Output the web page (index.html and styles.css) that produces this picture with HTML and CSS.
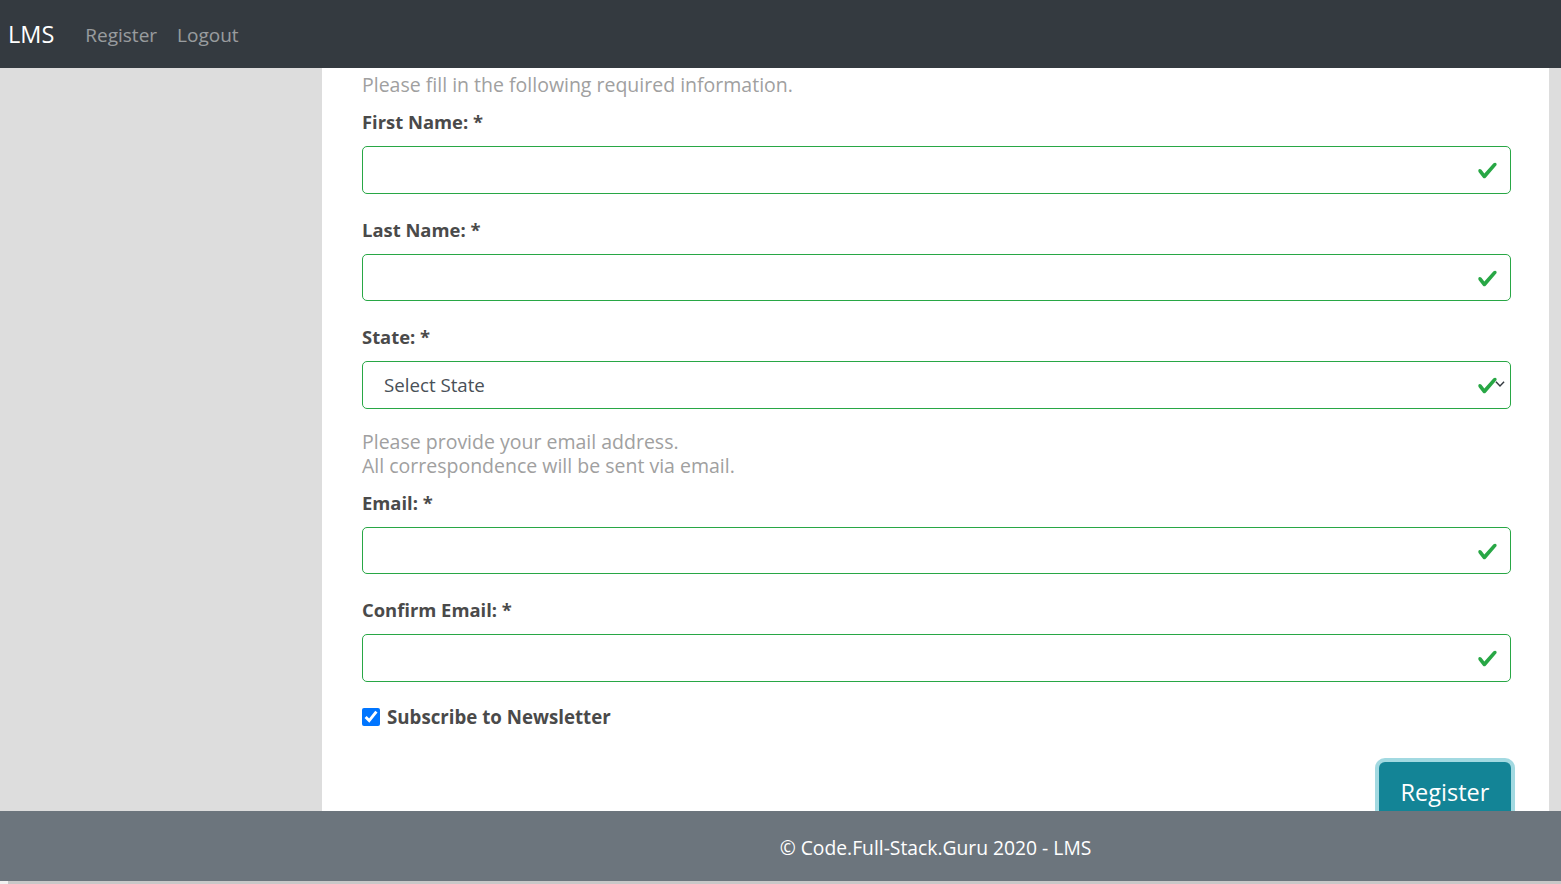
FILE: index.html
```html
<!DOCTYPE html>
<html lang="en">
<head>
<meta charset="utf-8">
<title>LMS - Register</title>
<link rel="stylesheet" href="styles.css">
</head>
<body>
<div class="app">
  <nav class="navbar">
    <a class="brand" href="#">LMS</a>
    <a class="nav-link" href="#">Register</a>
    <a class="nav-link" href="#">Logout</a>
  </nav>
  <div class="middle">
    <aside class="sidebar"></aside>
    <main class="content">
      <form class="form">
        <p class="help first-help">Please fill in the following required information.</p>
        <div class="form-group">
          <label class="label">First Name: *</label>
          <div class="field">
            <input class="control" type="text">
            <svg class="valid-icon" viewBox="0 0 8 8"><path fill="#28a745" d="M2.3 6.73L.6 4.53c-.4-1.04.46-1.4 1.1-.8l1.1 1.4 3.4-3.8c.6-.63 1.6-.27 1.2.7l-4 4.6c-.43.5-.8.4-1.1.1z"/></svg>
          </div>
        </div>
        <div class="form-group">
          <label class="label">Last Name: *</label>
          <div class="field">
            <input class="control" type="text">
            <svg class="valid-icon" viewBox="0 0 8 8"><path fill="#28a745" d="M2.3 6.73L.6 4.53c-.4-1.04.46-1.4 1.1-.8l1.1 1.4 3.4-3.8c.6-.63 1.6-.27 1.2.7l-4 4.6c-.43.5-.8.4-1.1.1z"/></svg>
          </div>
        </div>
        <div class="form-group state-group">
          <label class="label">State: *</label>
          <div class="field">
            <div class="control select">Select State</div>
            <svg class="chevron" viewBox="0 0 4 5"><path fill="none" stroke="#343a40" stroke-width=".6" d="M.3 1.6L2 3.3 3.7 1.6"/></svg>
            <svg class="valid-icon" viewBox="0 0 8 8"><path fill="#28a745" d="M2.3 6.73L.6 4.53c-.4-1.04.46-1.4 1.1-.8l1.1 1.4 3.4-3.8c.6-.63 1.6-.27 1.2.7l-4 4.6c-.43.5-.8.4-1.1.1z"/></svg>
          </div>
        </div>
        <p class="help email-help">Please provide your email address.<br>All correspondence will be sent via email.</p>
        <div class="form-group">
          <label class="label">Email: *</label>
          <div class="field">
            <input class="control" type="text">
            <svg class="valid-icon" viewBox="0 0 8 8"><path fill="#28a745" d="M2.3 6.73L.6 4.53c-.4-1.04.46-1.4 1.1-.8l1.1 1.4 3.4-3.8c.6-.63 1.6-.27 1.2.7l-4 4.6c-.43.5-.8.4-1.1.1z"/></svg>
          </div>
        </div>
        <div class="form-group">
          <label class="label">Confirm Email: *</label>
          <div class="field">
            <input class="control" type="text">
            <svg class="valid-icon" viewBox="0 0 8 8"><path fill="#28a745" d="M2.3 6.73L.6 4.53c-.4-1.04.46-1.4 1.1-.8l1.1 1.4 3.4-3.8c.6-.63 1.6-.27 1.2.7l-4 4.6c-.43.5-.8.4-1.1.1z"/></svg>
          </div>
        </div>
        <div class="check-row">
          <input class="checkbox" type="checkbox" checked>
          <span class="check-label">Subscribe to Newsletter</span>
        </div>
        <div class="actions">
          <button class="btn" type="button">Register</button>
        </div>
      </form>
    </main>
    <div class="rail"></div>
  </div>
  <footer class="footer">
    <span class="footer-text">© Code.Full-Stack.Guru 2020 - LMS</span>
  </footer>
  <div class="hscroll"><div class="hthumb"></div></div>
</div>
</body>
</html>
```
FILE: styles.css
```css
* { box-sizing: border-box; }
html, body { margin: 0; padding: 0; }
body {
  font-family: "Open Sans", "Noto Sans", sans-serif;
  background: #dddddd;
  overflow: hidden;
}
.app {
  height: 884px;
  display: flex;
  flex-direction: column;
}
.navbar {
  height: 68px;
  flex: none;
  background: #343a40;
  display: flex;
  align-items: center;
  padding: 0 8px;
}
.brand {
  color: #ffffff;
  font-size: 23.5px;
  text-decoration: none;
  margin-right: 31px;
  line-height: 1;
  padding-top: 2px;
}
.nav-link {
  color: rgba(255,255,255,0.5);
  font-size: 19px;
  text-decoration: none;
  margin-right: 20px;
  line-height: 1;
  padding-top: 2px;
}
.middle {
  flex: 1;
  display: flex;
  overflow: hidden;
  min-height: 0;
}
.sidebar {
  width: 322px;
  flex: none;
  background: #dddddd;
}
.content {
  width: 1227px;
  flex: none;
  background: #ffffff;
  padding: 5px 38px 0 40px;
}
.rail {
  flex: 1;
  background: #dddddd;
}
.form { display: flex; flex-direction: column; }
.help {
  margin: 0;
  color: #a0a0a0;
  font-size: 19.5px;
  line-height: 24px;
}
.first-help { margin-bottom: 13px; }
.email-help { margin-bottom: 13px; }
.form-group { margin-bottom: 24px; }
.state-group { margin-bottom: 21px; }
.label {
  display: block;
  color: #4a4a4a;
  font-weight: 700;
  font-size: 18.4px;
  line-height: 24px;
  margin-bottom: 12px;
}
.field { position: relative; }
.control {
  display: block;
  width: 100%;
  height: 47.5px;
  border: 1px solid #28a745;
  border-radius: 5px;
  background: #ffffff;
  font-family: inherit;
  font-size: 18.7px;
  color: #495057;
  padding: 0 21px;
  outline: none;
}
.select {
  display: flex;
  align-items: center;
}
.valid-icon {
  position: absolute;
  right: 13px;
  top: 14px;
  width: 21px;
  height: 21px;
}
.chevron {
  position: absolute;
  right: 6px;
  top: 17px;
  width: 10px;
  height: 12px;
}
.check-row {
  display: flex;
  align-items: center;
  height: 24px;
  margin-top: -1px;
}
.checkbox {
  width: 18px;
  height: 18px;
  margin: 0 7px 0 0;
  accent-color: #0075ff;
}
.check-label {
  color: #4a4a4a;
  font-weight: 700;
  font-size: 18.7px;
}
.actions {
  display: flex;
  justify-content: flex-end;
  margin-top: 33px;
}
.btn {
  width: 132px;
  height: 60px;
  background: #138496;
  color: #ffffff;
  border: none;
  border-radius: 6px;
  font-family: inherit;
  font-size: 23.5px;
  box-shadow: 0 0 0 4px #a2d9e1;
  padding: 0;
}
.footer {
  height: 70px;
  flex: none;
  background: #6c757d;
  display: flex;
  align-items: center;
  padding-left: 322px;
  padding-right: 12px;
  justify-content: center;
}
.footer-text {
  color: #ffffff;
  font-size: 19.3px;
  padding-top: 2px;
}
.hscroll {
  height: 3px;
  flex: none;
  background: #f1f1f1;
  padding-left: 8px;
}
.hthumb {
  height: 3px;
  background: #c8c8c8;
}
```
